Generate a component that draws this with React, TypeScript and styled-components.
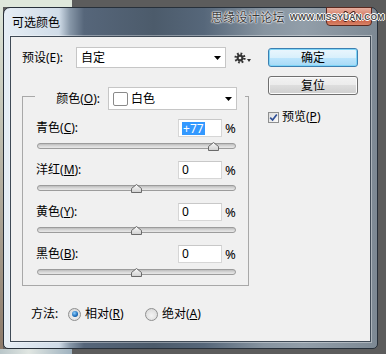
import React from "react";
import styled, { createGlobalStyle } from "styled-components";

const GlobalStyle = createGlobalStyle`
  html, body { margin: 0; padding: 0; }
  body {
    width: 386px;
    height: 354px;
    overflow: hidden;
    background:
      linear-gradient(#dfe8dc, #dfe8dc) 0 0 / 72px 7px no-repeat,
      linear-gradient(90deg, #b9c6c9, #e0e6e2 40%, #9fb2bf) 0 349px / 72px 5px no-repeat,
      linear-gradient(#dfe8dc, #8a7868) 0 0 / 3px 100% no-repeat,
      #5c5c5c;
    font-family: "Noto Sans", "Noto Sans CJK SC", sans-serif;
    font-size: 12px;
    color: #000;
  }
  #root { width: 386px; height: 354px; }
`;

const Page = styled.div`
  box-sizing: border-box;
  width: 386px;
  height: 354px;
  padding: 7px 8px 0 3px;
`;

const Window = styled.div`
  position: relative;
  box-sizing: border-box;
  width: 375px;
  height: 342px;
  border: 1px solid #27303a;
  border-radius: 7px 7px 5px 5px;
  background: linear-gradient(
    90deg,
    #e6eef5 0px,
    #d0dce8 55px,
    #8797a8 66px,
    #56667a 80px,
    #4c5b6b 150px,
    #56677a 200px,
    #8794a0 260px,
    #929ea9 300px,
    #7d8994 373px
  );
  display: flex;
  flex-direction: column;
`;

const TitleBar = styled.div`
  height: 28px;
  display: flex;
  align-items: center;
  padding-left: 8px;
`;

const Title = styled.span`
  font-family: "Noto Sans CJK SC", sans-serif;
  font-size: 12px;
  line-height: 1;
  color: #000;
`;

const CloseButton = styled.div`
  margin-left: auto;
  align-self: flex-start;
  margin-top: -1px;
  margin-right: 5px;
  width: 46px;
  height: 19px;
  box-sizing: border-box;
  border: 1px solid #5a2a20;
  border-radius: 0 0 4px 4px;
  background: linear-gradient(#e8b0a0, #d37a64 45%, #c24e34 55%, #d98468);
  display: flex;
  align-items: center;
  justify-content: center;
`;

const Watermark = styled.div`
  position: absolute;
  z-index: 2;
  left: 207px;
  top: 1px;
  height: 16px;
  display: flex;
  align-items: center;
  gap: 5px;
  white-space: nowrap;
  pointer-events: none;
`;

const WatermarkCn = styled.span`
  font-family: "Noto Sans CJK SC", sans-serif;
  font-size: 12px;
  line-height: 1;
  letter-spacing: 0.3px;
  color: #3a3a3a;
  text-shadow: 0 0 2px #fff, 0 0 2px #fff, 0 0 1px #fff;
`;

const WatermarkEn = styled.span`
  font-family: "Liberation Sans", sans-serif;
  font-size: 8.5px;
  font-weight: bold;
  line-height: 1;
  letter-spacing: 0.1px;
  color: #4a4a4a;
  text-shadow: 1px 0 0 #fff, -1px 0 0 #fff, 0 1px 0 #fff, 0 -1px 0 #fff;
`;

const Client = styled.div`
  flex: 1;
  margin: 0 6px 6px;
  box-sizing: border-box;
  background: #f0f0f0;
  border: 1px solid #3f4a56;
  box-shadow: 0 0 0 1px rgba(255, 255, 255, 0.35);
  display: flex;
  flex-direction: column;
  padding: 10px 0 0 11px;
`;

const TopArea = styled.div`
  display: flex;
  align-items: flex-start;
`;

const LeftCol = styled.div`
  width: 227px;
  display: flex;
  flex-direction: column;
`;

const PresetRow = styled.div`
  display: flex;
  align-items: center;
  height: 21px;
`;

const FieldLabel = styled.span<{ $width?: number }>`
  ${(p) => (p.$width ? `width: ${p.$width}px; flex-shrink: 0;` : "")}
  font-size: 12px;
  line-height: 16px;
  white-space: nowrap;
`;

const Key = styled.span`
  text-decoration: underline;
  text-underline-offset: 1px;
`;

const Select = styled.div<{ $width: number; $height: number }>`
  box-sizing: border-box;
  width: ${(p) => p.$width}px;
  height: ${(p) => p.$height}px;
  flex-shrink: 0;
  border: 1px solid #c6c6c6;
  background: #fff;
  display: flex;
  align-items: center;
  padding: 0 4px 0 4px;
  font-size: 12px;
  line-height: 16px;
`;

const SelectText = styled.span`
  flex: 1;
`;

const Swatch = styled.span`
  width: 15px;
  height: 14px;
  box-sizing: border-box;
  border: 1px solid #8a8a8a;
  border-radius: 2px;
  background: #fff;
  margin-right: 3px;
  flex-shrink: 0;
`;

const GearButton = styled.div`
  margin-left: 8px;
  display: flex;
  align-items: center;
  gap: 1px;
`;

const Group = styled.fieldset`
  margin: 19px 0 0;
  padding: 14px 12px 8px 13px;
  border: 1px solid #a8a8a8;
  min-width: 0;
  width: 227px;
  box-sizing: border-box;
`;

const Legend = styled.legend`
  margin-left: -1px;
  padding: 0 8px 0 0;
  width: 210px;
  height: 18px;
  box-sizing: border-box;
  display: flex;
  justify-content: flex-end;
  align-items: flex-start;
  gap: 8px;
`;

const LegendLabel = styled.span`
  font-size: 12px;
  line-height: 23px;
  white-space: nowrap;
`;

const SliderRow = styled.div`
  display: flex;
  flex-direction: column;
  & + & {
    margin-top: 10px;
  }
`;

const RowTop = styled.div`
  display: flex;
  align-items: center;
  height: 18px;
`;

const RowLabel = styled.span`
  flex: 1;
  font-size: 12px;
  line-height: 16px;
`;

const ValueBox = styled.div`
  box-sizing: border-box;
  width: 44px;
  height: 18px;
  border: 1px solid #d6d6d6;
  border-top-color: #c8c8c8;
  background: #fff;
  padding-left: 3px;
  display: flex;
  align-items: center;
  font-family: "Noto Sans", sans-serif;
  font-size: 12px;
  line-height: 14px;
`;

const Selected = styled.span`
  background: #3399ff;
  color: #fff;
  padding: 0 1px;
  line-height: 13px;
`;

const Percent = styled.span`
  margin-left: 3px;
  width: 11px;
  font-family: "Noto Sans", sans-serif;
  font-size: 13px;
  line-height: 16px;
`;

const TrackArea = styled.div`
  position: relative;
  margin: 5px 0 0 1px;
  width: 199px;
  height: 9px;
`;

const Rail = styled.div`
  margin-top: 1px;
  height: 6px;
  box-sizing: border-box;
  border: 1px solid #9c9c9c;
  border-radius: 3px;
  background: linear-gradient(#bdbdbd, #d8d8d8 50%, #e8e8e8);
`;

const Thumb = styled.svg`
  position: absolute;
  top: 0;
  margin-left: -5.5px;
`;

const RightCol = styled.div`
  margin-left: 19px;
  padding-top: 1px;
  display: flex;
  flex-direction: column;
`;

const Button = styled.div<{ $primary?: boolean }>`
  box-sizing: border-box;
  width: 90px;
  height: 19px;
  border: 1px solid ${(p) => (p.$primary ? "#3c7fb1" : "#707070")};
  border-radius: 3px;
  background: ${(p) =>
    p.$primary
      ? "linear-gradient(#eaf6fd, #d9f0fc 50%, #bee6fd 50%, #a7d9f5)"
      : "linear-gradient(#f2f2f2, #ebebeb 50%, #dddddd 50%, #cfcfcf)"};
  box-shadow: ${(p) => (p.$primary ? "inset 0 0 0 1px #7fd5f7" : "inset 0 0 0 1px #fbfbfb")};
  display: flex;
  align-items: center;
  justify-content: center;
  font-size: 12px;
  line-height: 16px;
  & + & {
    margin-top: 9px;
  }
`;

const CheckRow = styled.div`
  margin-top: 16px;
  display: flex;
  align-items: center;
  gap: 3px;
  height: 12px;
`;

const CheckBox = styled.span`
  width: 11px;
  height: 11px;
  box-sizing: border-box;
  border: 1px solid #8e8f8f;
  background: linear-gradient(135deg, #dcdcdc, #fbfbfb);
  display: flex;
  align-items: center;
  justify-content: center;
`;

const MethodRow = styled.div`
  margin-top: 20px;
  padding-left: 9px;
  display: flex;
  align-items: center;
  height: 16px;
`;

const RadioOption = styled.div<{ $width?: number }>`
  display: flex;
  align-items: center;
  gap: 4px;
  ${(p) => (p.$width ? `width: ${p.$width}px;` : "")}
`;

const Radio = styled.span<{ $checked?: boolean }>`
  width: 13px;
  height: 13px;
  box-sizing: border-box;
  border-radius: 50%;
  border: 1px solid #8e8f8f;
  background: radial-gradient(circle at 50% 60%, #f4f4f4, #d4d4d4);
  display: flex;
  align-items: center;
  justify-content: center;
  &::after {
    content: "";
    display: ${(p) => (p.$checked ? "block" : "none")};
    width: 6px;
    height: 6px;
    border-radius: 50%;
    background: radial-gradient(circle at 40% 35%, #8fd0ff, #1a6bb8 60%, #0d3f78);
  }
`;

const Arrow = ({ w = 7 }: { w?: number }) => (
  <svg width={w} height="4" viewBox="0 0 7 4">
    <path d="M0 0h7L3.5 4z" fill="#000" />
  </svg>
);

const Gear = () => (
  <svg width="12" height="12" viewBox="0 0 12 12">
    <circle cx="6" cy="6" r="4.4" fill="none" stroke="#333" strokeWidth="2.4" strokeDasharray="1.7 1.75" />
    <circle cx="6" cy="6" r="3.4" fill="#333" />
    <circle cx="6" cy="6" r="1.3" fill="#f0f0f0" />
  </svg>
);

const SmallDown = () => (
  <svg width="4" height="3" viewBox="0 0 4 3" style={{ marginTop: 6 }}>
    <path d="M0 0h4L2 3z" fill="#333" />
  </svg>
);

const CloseGlyph = () => (
  <svg width="13" height="11" viewBox="0 0 13 11">
    <path d="M2.5 2l8 7M10.5 2l-8 7" stroke="#4a2018" strokeWidth="4" strokeLinecap="round" />
    <path d="M2.5 2l8 7M10.5 2l-8 7" stroke="#f4f4f4" strokeWidth="2" strokeLinecap="round" />
  </svg>
);

const ThumbShape = () => (
  <>
    <defs>
      <linearGradient id="thumbg" x1="0" y1="0" x2="0" y2="1">
        <stop offset="0" stopColor="#fafafa" />
        <stop offset="1" stopColor="#d0d0d0" />
      </linearGradient>
    </defs>
    <path d="M0.5 8.5V4.5L5.5 0.5L10.5 4.5V8.5Z" fill="url(#thumbg)" stroke="#6a6a6a" strokeWidth="1" />
  </>
);

type SliderDef = { name: string; key: string; value: number; selected?: boolean };

const sliders: SliderDef[] = [
  { name: "青色", key: "C", value: 77, selected: true },
  { name: "洋红", key: "M", value: 0 },
  { name: "黄色", key: "Y", value: 0 },
  { name: "黑色", key: "B", value: 0 },
];

const TRACK_W = 199;

export default function App() {
  return (
    <>
      <GlobalStyle />
      <Page>
        <Window>
          <TitleBar>
            <Title>可选颜色</Title>
            <CloseButton>
              <CloseGlyph />
            </CloseButton>
          </TitleBar>
          <Watermark>
            <WatermarkCn>思缘设计论坛</WatermarkCn>
            <WatermarkEn>WWW.MISSYUAN.COM</WatermarkEn>
          </Watermark>
          <Client>
            <TopArea>
              <LeftCol>
                <PresetRow>
                  <FieldLabel $width={54}>预设(E):</FieldLabel>
                  <Select $width={150} $height={21}>
                    <SelectText>自定</SelectText>
                    <Arrow />
                  </Select>
                  <GearButton>
                    <Gear />
                    <SmallDown />
                  </GearButton>
                </PresetRow>
                <Group>
                  <Legend>
                    <LegendLabel>
                      颜色(<Key>O</Key>):
                    </LegendLabel>
                    <Select $width={129} $height={23}>
                      <Swatch />
                      <SelectText>白色</SelectText>
                      <Arrow />
                    </Select>
                  </Legend>
                  {sliders.map((s) => (
                    <SliderRow key={s.key}>
                      <RowTop>
                        <RowLabel>
                          {s.name}(<Key>{s.key}</Key>):
                        </RowLabel>
                        <ValueBox>
                          {s.selected ? <Selected>+{s.value}</Selected> : <span>{s.value}</span>}
                        </ValueBox>
                        <Percent>%</Percent>
                      </RowTop>
                      <TrackArea>
                        <Rail />
                        <Thumb
                          width="11"
                          height="9"
                          viewBox="0 0 11 9"
                          style={{ left: TRACK_W / 2 + (s.value / 100) * (TRACK_W / 2) }}
                        >
                          <ThumbShape />
                        </Thumb>
                      </TrackArea>
                    </SliderRow>
                  ))}
                </Group>
              </LeftCol>
              <RightCol>
                <Button $primary>确定</Button>
                <Button>复位</Button>
                <CheckRow>
                  <CheckBox>
                    <svg width="9" height="9" viewBox="0 0 9 9">
                      <path d="M1.2 4.6L3.6 7L7.8 1.4" fill="none" stroke="#2f4f96" strokeWidth="1.7" />
                    </svg>
                  </CheckBox>
                  <FieldLabel>
                    预览(<Key>P</Key>)
                  </FieldLabel>
                </CheckRow>
              </RightCol>
            </TopArea>
            <MethodRow>
              <FieldLabel $width={37}>方法:</FieldLabel>
              <RadioOption $width={77}>
                <Radio $checked />
                <FieldLabel>
                  相对(<Key>R</Key>)
                </FieldLabel>
              </RadioOption>
              <RadioOption>
                <Radio />
                <FieldLabel>
                  绝对(<Key>A</Key>)
                </FieldLabel>
              </RadioOption>
            </MethodRow>
          </Client>
        </Window>
      </Page>
    </>
  );
}
